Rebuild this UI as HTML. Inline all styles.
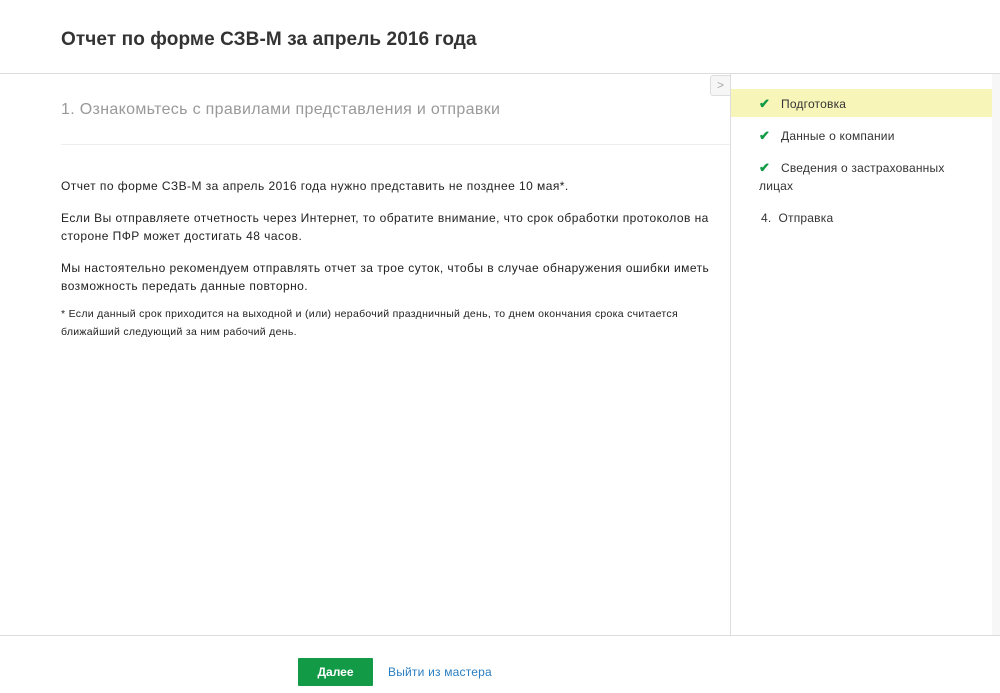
<!DOCTYPE html>
<html><head><meta charset="utf-8"><style>
body{margin:0;width:1000px;height:693px;background:#fff;font-family:"Liberation Sans",Arial,sans-serif;position:relative;overflow:hidden;color:#222}
.h1{position:absolute;left:61px;top:29px;font-size:19px;font-weight:bold;color:#333;letter-spacing:0.1px}
.hl{position:absolute;left:0;top:73px;width:1000px;height:1px;background:#ddd}
.side{position:absolute;left:730px;top:74px;width:261px;height:561px;border-left:1px solid #ddd;border-right:1px solid #ddd}
.rg{position:absolute;left:992px;top:74px;width:8px;height:561px;background:#f7f7f7}
.tog{position:absolute;left:710px;top:75px;width:19px;height:19px;border:1px solid #ddd;border-right:none;border-radius:3px 0 0 3px;background:#f6f6f6;color:#aaa;font-size:12px;line-height:18px;text-align:center}
.it{position:absolute;font-size:12px;color:#333;line-height:18px;letter-spacing:0.2px}
.ck{color:#129a47;font-weight:bold;display:inline-block;width:22px;font-size:13px}
.t2{position:absolute;left:61px;top:101px;font-size:16px;color:#999;letter-spacing:0.33px}
.sep{position:absolute;left:61px;top:144px;width:669px;height:1px;background:#eee}
p{margin:0;position:absolute;left:61px;font-size:12px;line-height:18px;color:#222;width:660px;letter-spacing:0.45px}
.fl{position:absolute;left:0;top:635px;width:1000px;height:1px;background:#ddd}
.btn{position:absolute;left:298px;top:658px;width:75px;height:28px;background:#129a47;color:#fff;font-weight:bold;font-size:12px;line-height:28px;text-align:center;border-radius:1px}
.lnk{position:absolute;left:388px;top:665px;font-size:12px;color:#2a7ec1;letter-spacing:0.2px}
</style></head><body>
<div class="h1">Отчет по форме СЗВ-М за апрель 2016 года</div>
<div class="hl"></div>
<div class="tog">&gt;</div>
<div class="side">
<div style="position:absolute;left:0;top:15px;width:261px;height:28px;background:#f7f5b7"></div>
<div class="it" style="left:28px;top:21px"><span class="ck">✔</span>Подготовка</div>
<div class="it" style="left:28px;top:53px"><span class="ck">✔</span>Данные о компании</div>
<div class="it" style="left:28px;top:85px;width:220px"><span class="ck">✔</span>Сведения о застрахованных</div>
<div class="it" style="left:28px;top:103px">лицах</div>
<div class="it" style="left:30px;top:135px">4.&nbsp; Отправка</div>
</div>
<div class="rg"></div>
<div class="t2">1. Ознакомьтесь с правилами представления и отправки</div>
<div class="sep"></div>
<p style="top:177px">Отчет по форме СЗВ-М за апрель 2016 года нужно представить не позднее 10 мая*.</p>
<p style="top:209px">Если Вы отправляете отчетность через Интернет, то обратите внимание, что срок обработки протоколов на стороне ПФР может достигать 48 часов.</p>
<p style="top:259px">Мы настоятельно рекомендуем отправлять отчет за трое суток, чтобы в случае обнаружения ошибки иметь возможность передать данные повторно.</p>
<p style="top:305px;font-size:10.5px;letter-spacing:0.3px;width:640px">* Если данный срок приходится на выходной и (или) нерабочий праздничный день, то днем окончания срока считается ближайший следующий за ним рабочий день.</p>
<div class="fl"></div>
<div class="btn">Далее</div>
<div class="lnk">Выйти из мастера</div>
</body></html>
